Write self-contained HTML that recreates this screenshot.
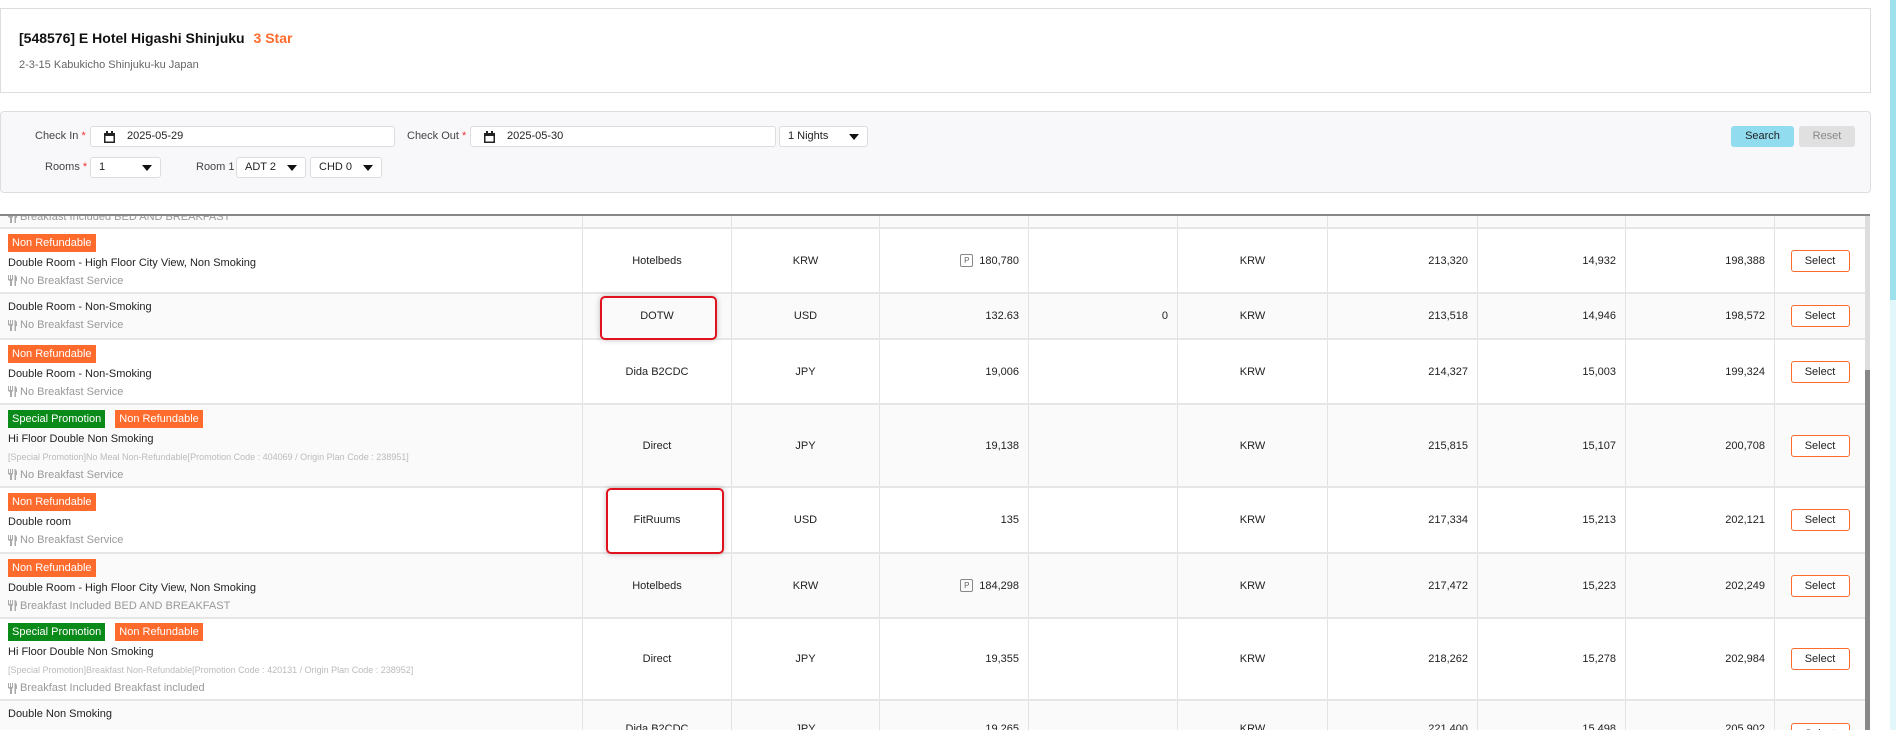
<!DOCTYPE html>
<html><head><meta charset="utf-8"><style>
*{box-sizing:border-box;margin:0;padding:0}
html,body{width:1896px;height:730px;overflow:hidden}
body{background:#fff;font-family:"Liberation Sans",Arial,sans-serif;font-size:11px;color:#222;position:relative}
.abs{position:absolute}
.hdr{left:0;top:8px;width:1871px;height:85px;border:1px solid #ddd}
.panel{left:0;top:111px;width:1871px;height:82px;border:1px solid #ddd;border-radius:4px;background:#f8f7fa}
.inp{position:absolute;height:21px;border:1px solid #ddd;border-radius:3px;background:#fff;font-size:11px;line-height:19px;padding-left:8px}
.lbl{position:absolute;font-size:11px;color:#444;line-height:21px}
.lbl b{color:#e33;font-weight:normal}
.tri{position:absolute;right:8px;top:7px;width:0;height:0;border-left:5px solid transparent;border-right:5px solid transparent;border-top:6px solid #111}
.row{position:absolute;left:0;width:1865px;border-bottom:2px solid #e6e6e6;overflow:hidden}
.g{background:#fafafa}
.c{position:absolute;top:0;bottom:0;border-left:1px solid #e3e3e3;display:flex;align-items:center;justify-content:center}
.r{justify-content:flex-end;padding-right:9px}
.tag{display:inline-block;color:#fff;background:#ff6b2c;font-size:11px;height:18px;line-height:18px;padding:0 4px;margin-right:10px}
.sp{background:#0a8a18}
.bf{color:#999;font-size:11px;display:flex;align-items:center}
.fk{width:9px;height:11px;margin-right:3px}
.sel{width:59px;height:22px;border:1px solid #ff6b2c;border-radius:3px;background:#fff;font-size:11px;line-height:20px;text-align:center}
.p{display:inline-block;width:13px;height:13px;border:1px solid #888;border-radius:2px;font-size:8px;line-height:11px;text-align:center;color:#666;margin-right:6px}
.hl{position:absolute;border:2px solid #e0121e;border-radius:5px;box-shadow:0 0 6px rgba(0,0,0,.25)}
.info{position:absolute;left:8px;top:0;bottom:0;display:flex;flex-direction:column;justify-content:center;gap:4px;line-height:14px}
</style></head><body>
<div class="abs hdr">
 <div class="abs" style="left:18px;top:21px;font-size:14px;font-weight:bold;color:#111">[548576] E Hotel Higashi Shinjuku <span style="color:#ff6b2c;margin-left:5px">3 Star</span></div>
 <div class="abs" style="left:18px;top:50px;font-size:11px;color:#666">2-3-15 Kabukicho Shinjuku-ku Japan</div>
</div>
<div class="abs panel">
 <div class="lbl" style="left:34px;top:14px">Check In <b>*</b></div>
 <div class="inp" style="left:89px;top:14px;width:305px;padding-left:36px"><svg style="position:absolute;left:13px;top:4px" width="11" height="12" viewBox="0 0 11 12"><rect x="0" y="2" width="11" height="10" fill="#222"/><rect x="2" y="0" width="2" height="3" fill="#222"/><rect x="7" y="0" width="2" height="3" fill="#222"/><rect x="1.5" y="5" width="8" height="5.5" fill="#fff"/></svg>2025-05-29</div>
 <div class="lbl" style="left:406px;top:14px">Check Out <b>*</b></div>
 <div class="inp" style="left:469px;top:14px;width:306px;padding-left:36px"><svg style="position:absolute;left:13px;top:4px" width="11" height="12" viewBox="0 0 11 12"><rect x="0" y="2" width="11" height="10" fill="#222"/><rect x="2" y="0" width="2" height="3" fill="#222"/><rect x="7" y="0" width="2" height="3" fill="#222"/><rect x="1.5" y="5" width="8" height="5.5" fill="#fff"/></svg>2025-05-30</div>
 <div class="inp" style="left:778px;top:14px;width:89px">1 Nights<span class="tri"></span></div>
 <div class="lbl" style="left:44px;top:45px">Rooms <b>*</b></div>
 <div class="inp" style="left:89px;top:45px;width:71px">1<span class="tri"></span></div>
 <div class="lbl" style="left:195px;top:45px">Room 1</div>
 <div class="inp" style="left:235px;top:45px;width:70px">ADT 2<span class="tri"></span></div>
 <div class="inp" style="left:309px;top:45px;width:72px">CHD 0<span class="tri"></span></div>
 <div class="abs" style="left:1730px;top:14px;width:63px;height:21px;background:#92dcf0;border-radius:3px;text-align:center;line-height:21px;font-size:11px">Search</div>
 <div class="abs" style="left:1798px;top:14px;width:56px;height:21px;background:#e0e0e0;border-radius:3px;text-align:center;line-height:21px;font-size:11px;color:#888">Reset</div>
</div>
<div class="abs" style="left:0;top:214px;width:1870px;height:2px;background:#888"></div>
<div class="abs" style="left:1865px;top:216px;width:5px;height:514px;background:#ddd"></div>
<div class="abs" style="left:1865px;top:370px;width:5px;height:360px;background:#888"></div>
<div class="abs" style="left:1890px;top:0;width:6px;height:730px;background:#e3f6fa"></div>
<div class="abs" style="left:1890px;top:0;width:6px;height:300px;background:#9ee0ec"></div>

<div id="t"></div>
<script>
var X=[0,582,731,879,1028,1177,1327,1477,1625,1774,1865];
var FK='<svg class="fk" viewBox="0 0 9 11"><path d="M0 0h1v4h1V0h1v4h1V0h1v5l-1 1v5H2V6L0 5z M6.5 0C8 0 9 1.5 9 4v2H8v5H6.5z" fill="#aaa"/></svg>';
var rows=[
[216,229,1,'','','','','','','','','',''],
[229,294,0,['nr'],'Double Room - High Floor City View, Non Smoking','','No Breakfast Service','Hotelbeds','KRW','P180,780','','KRW','213,320','14,932','198,388'],
[294,340,1,[],'Double Room - Non-Smoking','','No Breakfast Service','DOTW','USD','132.63','0','KRW','213,518','14,946','198,572'],
[340,405,0,['nr'],'Double Room - Non-Smoking','','No Breakfast Service','Dida B2CDC','JPY','19,006','','KRW','214,327','15,003','199,324'],
[405,488,1,['sp','nr'],'Hi Floor Double Non Smoking','[Special Promotion]No Meal Non-Refundable[Promotion Code : 404069 / Origin Plan Code : 238951]','No Breakfast Service','Direct','JPY','19,138','','KRW','215,815','15,107','200,708'],
[488,554,0,['nr'],'Double room','','No Breakfast Service','FitRuums','USD','135','','KRW','217,334','15,213','202,121'],
[554,619,1,['nr'],'Double Room - High Floor City View, Non Smoking','','Breakfast Included BED AND BREAKFAST','Hotelbeds','KRW','P184,298','','KRW','217,472','15,223','202,249'],
[619,701,0,['sp','nr'],'Hi Floor Double Non Smoking','[Special Promotion]Breakfast Non-Refundable[Promotion Code : 420131 / Origin Plan Code : 238952]','Breakfast Included Breakfast included','Direct','JPY','19,355','','KRW','218,262','15,278','202,984'],
[701,740,1,[],'Double Non Smoking','','','Dida B2CDC','JPY','19,265','','KRW','221,400','15,498','205,902']
];
var h='';
rows.forEach(function(r,i){
 h+='<div class="row'+(r[2]?' g':'')+'" style="top:'+r[0]+'px;height:'+(r[1]-r[0])+'px">';
 if(i==0){h+='<div class="info" style="justify-content:flex-start;top:-6px"><span class="bf">'+FK+'Breakfast Included BED AND BREAKFAST</span></div>';}
 else if(i==8){h+='<div class="info" style="justify-content:flex-start;top:6px"><div>'+r[4]+'</div></div>';}
 else{
  h+='<div class="info">';
  if(r[3].length){h+='<div>';r[3].forEach(function(t){h+=t=='sp'?'<span class="tag sp">Special Promotion</span>':'<span class="tag">Non Refundable</span>';});h+='</div>';}
  h+='<div>'+r[4]+'</div>';
  if(r[5])h+='<div style="color:#bbb;font-size:9px">'+r[5]+'</div>';
  h+='<div class="bf">'+FK+r[6]+'</div></div>';
 }
 for(var k=1;k<10;k++){
  var v=(i==0)?'':(k==9?'<div class="sel">Select</div>':r[k+6]);
  if(typeof v=='string'&&v.charAt(0)=='P')v='<span class="p">P</span>'+v.slice(1);
  var cls=(k==3||k==4||k==6||k==7||k==8)?'c r':'c';
  var st=(i==8)?';align-items:flex-start;padding-top:22px':'';
  h+='<div class="'+cls+'" style="left:'+X[k]+'px;width:'+(X[k+1]-X[k])+'px'+st+'">'+v+'</div>';
 }
 h+='</div>';
});
h+='<div class="hl" style="left:600px;top:296px;width:117px;height:44px"></div>';
h+='<div class="hl" style="left:606px;top:488px;width:118px;height:66px"></div>';
document.getElementById('t').innerHTML=h;
</script>
</body></html>
